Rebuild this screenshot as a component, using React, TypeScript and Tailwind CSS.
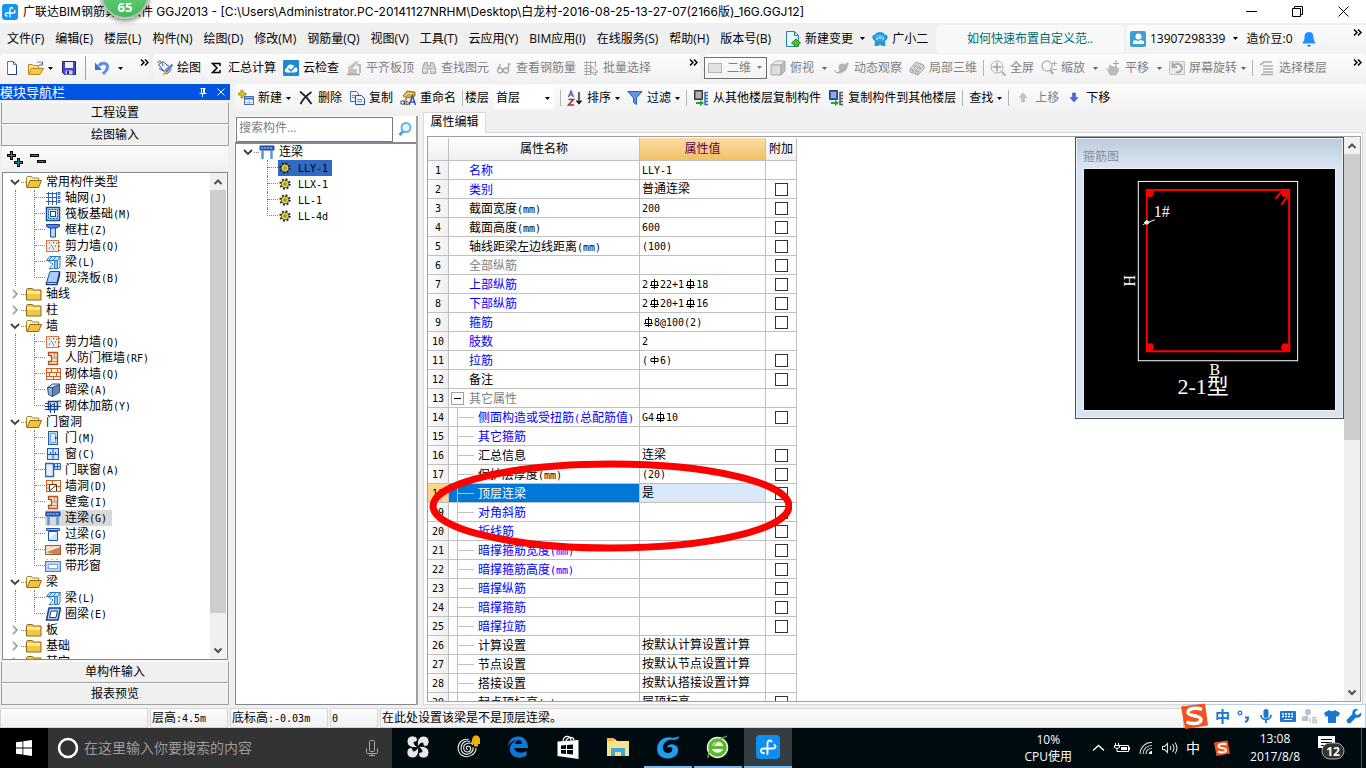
import React from "react";
import clsx from "clsx";

type IconName = string;

interface TreeGroup {
    name: string;
    items?: { name: string; icon: IconName; active?: boolean }[];
}

interface Property {
    name: string;
    value?: string;
    color?: "blue" | "gray";
    check?: boolean;
    child?: boolean;
    selected?: boolean;
}

const menus = [
    "文件(F)",
    "编辑(E)",
    "楼层(L)",
    "构件(N)",
    "绘图(D)",
    "修改(M)",
    "钢筋量(Q)",
    "视图(V)",
    "工具(T)",
    "云应用(Y)",
    "BIM应用(I)",
    "在线服务(S)",
    "帮助(H)",
    "版本号(B)",
];

const groups: TreeGroup[] = [
    {
        name: "常用构件类型",
        items: [
            { name: "轴网(J)", icon: "axis" },
            { name: "筏板基础(M)", icon: "raft" },
            { name: "框柱(Z)", icon: "column" },
            { name: "剪力墙(Q)", icon: "shear" },
            { name: "梁(L)", icon: "beam" },
            { name: "现浇板(B)", icon: "slab" },
        ],
    },
    { name: "轴线" },
    { name: "柱" },
    {
        name: "墙",
        items: [
            { name: "剪力墙(Q)", icon: "shear" },
            { name: "人防门框墙(RF)", icon: "niche" },
            { name: "砌体墙(Q)", icon: "brick" },
            { name: "暗梁(A)", icon: "hidden" },
            { name: "砌体加筋(Y)", icon: "rebar" },
        ],
    },
    {
        name: "门窗洞",
        items: [
            { name: "门(M)", icon: "door" },
            { name: "窗(C)", icon: "window" },
            { name: "门联窗(A)", icon: "doorwin" },
            { name: "墙洞(D)", icon: "hole" },
            { name: "壁龛(I)", icon: "niche" },
            { name: "连梁(G)", icon: "link", active: true },
            { name: "过梁(G)", icon: "lintel" },
            { name: "带形洞", icon: "striphole" },
            { name: "带形窗", icon: "stripwin" },
        ],
    },
    {
        name: "梁",
        items: [
            { name: "梁(L)", icon: "beam" },
            { name: "圈梁(E)", icon: "ring" },
        ],
    },
    { name: "板" },
    { name: "基础" },
    { name: "其它" },
];

// $ is a grade III bar symbol, % is a grade I bar symbol
const properties: Property[] = [
    { name: "名称", value: "LLY-1", color: "blue" },
    { name: "类别", value: "普通连梁", color: "blue", check: true },
    { name: "截面宽度(mm)", value: "200", check: true },
    { name: "截面高度(mm)", value: "600", check: true },
    { name: "轴线距梁左边线距离(mm)", value: "(100)", check: true },
    { name: "全部纵筋", color: "gray", check: true },
    { name: "上部纵筋", value: "2$22+1$18", color: "blue", check: true },
    { name: "下部纵筋", value: "2$20+1$16", color: "blue", check: true },
    { name: "箍筋", value: "$8@100(2)", color: "blue", check: true },
    { name: "肢数", value: "2", color: "blue" },
    { name: "拉筋", value: "(%6)", color: "blue", check: true },
    { name: "备注", check: true },
    { name: "其它属性", color: "gray" },
    { name: "侧面构造或受扭筋(总配筋值)", value: "G4$10", color: "blue", check: true, child: true },
    { name: "其它箍筋", color: "blue", child: true },
    { name: "汇总信息", value: "连梁", check: true, child: true },
    { name: "保护层厚度(mm)", value: "(20)", check: true, child: true },
    { name: "顶层连梁", value: "是", check: true, child: true, selected: true },
    { name: "对角斜筋", color: "blue", check: true, child: true },
    { name: "折线筋", color: "blue", check: true, child: true },
    { name: "暗撑箍筋宽度(mm)", color: "blue", check: true, child: true },
    { name: "暗撑箍筋高度(mm)", color: "blue", check: true, child: true },
    { name: "暗撑纵筋", color: "blue", check: true, child: true },
    { name: "暗撑箍筋", color: "blue", check: true, child: true },
    { name: "暗撑拉筋", color: "blue", check: true, child: true },
    { name: "计算设置", value: "按默认计算设置计算", child: true },
    { name: "节点设置", value: "按默认节点设置计算", child: true },
    { name: "搭接设置", value: "按默认搭接设置计算", child: true },
    { name: "起点顶标高(m)", value: "层顶标高", check: true, child: true },
];

export default function App() {
    return (
        <div className="h-screen flex flex-col overflow-hidden bg-[#f0f0f0] text-black text-xs leading-4 font-['Open_Sans','Noto_Sans_CJK_SC',sans-serif] whitespace-nowrap">
            <TitleBar />
            <MenuBar />
            <MainToolbar />
            <div className="flex-1 min-h-0 flex flex-row gap-[5px] pb-[3px]">
                <NavPanel />
                <div className="flex-1 min-w-0 flex flex-col">
                    <ComponentToolbar />
                    <div className="flex-1 min-h-0 flex flex-row gap-[5px]">
                        <ComponentPanel />
                        <PropertyEditor />
                    </div>
                </div>
            </div>
            <StatusBar />
            <Taskbar />
        </div>
    );
}

// SimSun style text: full width characters are 12px, latin ones are 6px
function Song({ text }: { text: string }) {
    return (
        <>
            {text.split(/([$%]|[ -#&-~]+)/).map((part, i) => {
                if (part === "") return null;
                if (part === "$" || part === "%") {
                    return <BarSymbol key={i} double={part === "$"} />;
                }
                return /^[ -~]/.test(part) ? (
                    <span key={i} className="text-[10px] font-['DejaVu_Sans_Mono',monospace]">
                        {part}
                    </span>
                ) : (
                    <span key={i}>{part}</span>
                );
            })}
        </>
    );
}

function BarSymbol({ double }: { double: boolean }) {
    return (
        <svg viewBox="0 0 12 10" className="inline-block w-3 h-[10px] align-[-1px]" fill="none" stroke="#000">
            {double ? (
                <path d="M3.500 2.500h6v4h-6zM6.500 0v10M2 6.500h9M3 8.500h7" />
            ) : (
                <path d="M3 3.500h7v3h-7zM6.500 1v8" />
            )}
        </svg>
    );
}

function Caret() {
    return (
        <svg viewBox="0 0 5 3" className="w-[5px] h-[3px] shrink-0">
            <path d="M0 0h5L2.5 3z" fill="currentColor" />
        </svg>
    );
}

function More() {
    return (
        <svg viewBox="0 0 9 7" className="w-[9px] h-[7px] shrink-0" fill="none" stroke="#000" strokeWidth="1.5">
            <path d="M1 .5l3 3-3 3M5 .5l3 3-3 3" />
        </svg>
    );
}

function Separator() {
    return <div className="w-px h-4 -mx-px bg-[#b5b5b5] shrink-0"></div>;
}

function Tool({
    icon,
    label,
    caret,
    disabled,
}: {
    icon?: IconName;
    label: string;
    caret?: boolean;
    disabled?: boolean;
}) {
    return (
        <button
            className={clsx("flex flex-row items-center gap-1 shrink-0", disabled && "text-[#808080]")}
            disabled={disabled}
        >
            {icon && <Icon name={icon} />}
            <span>{label}</span>
            {caret && <Caret />}
        </button>
    );
}

function TitleBar() {
    return (
        <header className="h-[23px] shrink-0 bg-white flex flex-row items-center relative pl-[2px]">
            <Icon name="app" />
            <h1 className="ml-[5px] flex-1 text-xs font-['Inter','Noto_Sans_CJK_SC',sans-serif]">
                广联达BIM钢筋算量软件 GGJ2013 - [C:\Users\Administrator.PC-20141127NRHM\Desktop\白龙村-2016-08-25-13-27-07(2166版)_16G.GGJ12]
            </h1>
            <div className="flex flex-row items-center">
                <button className="w-[46px] flex justify-center" aria-label="最小化">
                    <svg viewBox="0 0 11 11" className="w-[11px]" stroke="#000" fill="none">
                        <path d="M0 5.5h11" />
                    </svg>
                </button>
                <button className="w-[46px] flex justify-center" aria-label="还原">
                    <svg viewBox="0 0 11 11" className="w-[11px]" stroke="#000" fill="none">
                        <path d="M.5 2.5h8v8h-8zM2.5 2.5v-2h8v8h-2" />
                    </svg>
                </button>
                <button className="w-[46px] flex justify-center" aria-label="关闭">
                    <svg viewBox="0 0 11 11" className="w-[11px]" stroke="#000" fill="none">
                        <path d="M.5 .5l10 10M10.5 .5l-10 10" />
                    </svg>
                </button>
            </div>
            <div className="absolute left-[101px] -top-[29px] w-12 h-12 rounded-full bg-linear-to-b from-[#7fd98f] to-[#3fbb5b] border-2 border-[#b9bdb9] shadow-[0_2px_5px_rgba(0,0,0,0.5)] z-10 flex items-end justify-center pb-[2px] text-[13px] font-bold text-white">
                65
            </div>
        </header>
    );
}

function MenuBar() {
    return (
        <nav className="h-[31px] shrink-0 flex flex-row items-center pl-[7px]">
            <div className="flex flex-row items-center gap-[11px]">
                {menus.map((menu) => (
                    <button key={menu}>{menu}</button>
                ))}
            </div>
            <div className="ml-[14px] flex flex-row items-center gap-[7px]">
                <Tool icon="newchange" label="新建变更" />
                <Caret />
                <Tool icon="robot" label="广小二" />
            </div>
            <div className="ml-2 flex-1 h-[28px] rounded-sm bg-[#f8f8f8] flex items-center justify-center">
                <a href="#" className="text-[#006b6b]">
                    如何快速布置自定义范..
                </a>
            </div>
            <div className="ml-[2px] w-[240px] h-[28px] rounded-sm bg-linear-to-b from-[#fcfcfc] to-[#f2f2f2] flex flex-row items-center pl-1 pr-1 relative">
                <Tool icon="user" label="13907298339" />
                <span className="mx-2">
                    <Caret />
                </span>
                <span>造价豆:0</span>
                <span className="ml-2">
                    <Icon name="bell" />
                </span>
                <span className="ml-auto mb-3">
                    <More />
                </span>
            </div>
        </nav>
    );
}

function MainToolbar() {
    return (
        <div className="h-[30px] shrink-0 flex flex-row items-stretch gap-1 pb-[2px]">
            <div className="w-[149px] rounded bg-linear-to-b from-[#fdfdfd] to-[#f1f1f1] flex flex-row items-center pl-1 gap-1">
                <button aria-label="新建工程">
                    <Icon name="file" />
                </button>
                <button aria-label="打开" className="flex flex-row items-center gap-1 ml-1">
                    <Icon name="open" />
                    <Caret />
                </button>
                <button aria-label="保存" className="ml-1">
                    <Icon name="save" />
                </button>
                <div className="w-px h-6 ml-1 bg-[#a0a0a0]"></div>
                <button aria-label="撤销" className="flex flex-row items-center gap-2 ml-1">
                    <Icon name="undo" />
                    <Caret />
                </button>
                <span className="ml-auto mb-3">
                    <More />
                </span>
            </div>
            <div className="w-[547px] rounded bg-linear-to-b from-[#fdfdfd] to-[#f1f1f1] flex flex-row items-center pl-1 pr-[2px] gap-[7px]">
                <Tool icon="draw" label="绘图" />
                <Tool icon="sigma" label="汇总计算" />
                <Tool icon="cloud" label="云检查" />
                <Tool icon="align" label="平齐板顶" disabled />
                <Tool icon="binoculars" label="查找图元" disabled />
                <Tool icon="glasses" label="查看钢筋量" disabled />
                <Tool icon="batch" label="批量选择" disabled />
                <span className="ml-auto mb-3">
                    <More />
                </span>
            </div>
            <div className="flex-1 rounded bg-linear-to-b from-[#fdfdfd] to-[#f1f1f1] flex flex-row items-center gap-[7px] pr-1">
                <label className="w-[63px] h-[22px] border border-[#707070] relative flex flex-row items-center pl-[2px] gap-1 text-[#808080]">
                    <Icon name="flat" />
                    <select
                        aria-label="视图模式"
                        className="appearance-none w-full bg-transparent text-xs leading-4 outline-none"
                        disabled
                    >
                        <option>二维</option>
                    </select>
                    <span className="absolute right-1 top-2">
                        <Caret />
                    </span>
                </label>
                <div className="-ml-1 flex flex-row items-center gap-2 text-[#606060]">
                    <Tool icon="cube" label="俯视" disabled />
                    <Caret />
                </div>
                <Tool icon="orbit" label="动态观察" disabled />
                <Tool icon="local3d" label="局部三维" disabled />
                <Separator />
                <Tool icon="fullscreen" label="全屏" disabled />
                <div className="flex flex-row items-center gap-2 text-[#606060]">
                    <Tool icon="zoom" label="缩放" disabled />
                    <Caret />
                </div>
                <div className="flex flex-row items-center gap-2 text-[#606060]">
                    <Tool icon="pan" label="平移" disabled />
                    <Caret />
                </div>
                <div className="flex flex-row items-center gap-1 text-[#606060]">
                    <Tool icon="rotate" label="屏幕旋转" disabled />
                    <Caret />
                </div>
                <Separator />
                <Tool icon="floors" label="选择楼层" disabled />
                <span className="ml-auto mb-3">
                    <More />
                </span>
            </div>
        </div>
    );
}

function ComponentToolbar() {
    return (
        <div className="h-[28px] shrink-0 rounded-sm bg-linear-to-b from-[#fdfdfd] to-[#f1f1f1] flex flex-row items-center pl-[3px] gap-[7px]">
            <Tool icon="add" label="新建" caret />
            <Tool icon="delete" label="删除" />
            <Tool icon="copy" label="复制" />
            <Tool icon="rename" label="重命名" />
            <Separator />
            <label className="-ml-1 flex flex-row items-center gap-[5px] relative">
                楼层
                <select className="appearance-none w-[60px] h-[22px] bg-white text-xs leading-4 pl-[2px] outline-none">
                    <option>首层</option>
                </select>
                <span className="absolute right-1 top-[10px]">
                    <Caret />
                </span>
            </label>
            <Separator />
            <Tool icon="sort" label="排序" caret />
            <Tool icon="filter" label="过滤" caret />
            <Separator />
            <Tool icon="copyfrom" label="从其他楼层复制构件" />
            <Tool icon="copyto" label="复制构件到其他楼层" />
            <Separator />
            <Tool label="查找" caret />
            <Separator />
            <Tool icon="up" label="上移" disabled />
            <Tool icon="down" label="下移" />
        </div>
    );
}

function NavButton({ label }: { label: string }) {
    return (
        <button className="h-[22px] shrink-0 border border-[#a0a0a0] border-t-white bg-[#f0f0f0] text-center">
            {label}
        </button>
    );
}

function NavPanel() {
    return (
        <aside className="w-[230px] shrink-0 flex flex-col">
            <div className="h-4 shrink-0 bg-[#0054e3] text-white flex flex-row items-center">
                <h2 className="flex-1 text-[13px] leading-4">模块导航栏</h2>
                <button aria-label="固定" className="w-[18px] flex justify-center">
                    <svg viewBox="0 0 8 9" className="w-2" fill="none" stroke="#fff">
                        <path d="M1.5 .5h5M2.5 .5v5M5.5 .5v5M4.500 .5v5M.5 5.500h7M3.500 5.500v3.500" />
                    </svg>
                </button>
                <button aria-label="关闭导航" className="w-[18px] flex justify-center">
                    <svg viewBox="0 0 8 8" className="w-2" fill="none" stroke="#fff">
                        <path d="M.5 .5l7 7M7.500 .5l-7 7" />
                    </svg>
                </button>
            </div>
            <div className="flex-1 min-h-0 flex flex-col px-px pt-[2px]">
                <NavButton label="工程设置" />
                <NavButton label="绘图输入" />
                <div className="h-[26px] shrink-0 mx-px bg-linear-to-b from-[#fbfbfb] to-[#f0f0f0] flex flex-row items-center gap-[7px] pl-[5px]">
                    <button aria-label="全部展开">
                        <Icon name="expand" />
                    </button>
                    <button aria-label="全部折叠">
                        <Icon name="collapse" />
                    </button>
                </div>
                <div className="flex-1 min-h-0 mx-px mb-px border border-[#828790] bg-white flex flex-row overflow-hidden pr-px">
                    <div className="flex-1 overflow-hidden pt-px">
                        {groups.map((group) => (
                            <NavGroup key={group.name} group={group} />
                        ))}
                    </div>
                    <Scrollbar thumb="bottom-[46px]" />
                </div>
                <NavButton label="单构件输入" />
                <NavButton label="报表预览" />
            </div>
        </aside>
    );
}

function NavGroup({ group }: { group: TreeGroup }) {
    return (
        <div>
            <div className="h-4 flex flex-row items-center pl-[6px]">
                <Chevron open={!!group.items} />
                <span className="w-[5px] border-b border-dotted border-[#808080]"></span>
                <Icon name={group.items ? "folderopen" : "folder"} />
                <span className="ml-1">
                    <Song text={group.name} />
                </span>
            </div>
            {group.items && (
                <div className="ml-3 border-l border-dotted border-[#808080]">
                    {group.items.map((item, i) => (
                        <div key={item.name} className="h-4 flex flex-row items-center pl-[18px]">
                            <Branch last={i === group.items!.length - 1} />
                            <div
                                className={clsx(
                                    "flex flex-row items-center gap-1 pr-[5px] h-4",
                                    item.active && "bg-[#d9d9d9]"
                                )}
                            >
                                <Icon name={item.icon} />
                                <span>
                                    <Song text={item.name} />
                                </span>
                            </div>
                        </div>
                    ))}
                </div>
            )}
        </div>
    );
}

function Branch({ last }: { last: boolean }) {
    return (
        <span className={clsx("w-[11px] h-4", !last && "border-l border-dotted border-[#808080]")}>
            <span
                className={clsx(
                    "block h-2 border-b border-dotted border-[#808080]",
                    last && "border-l"
                )}
            ></span>
        </span>
    );
}

function Chevron({ open }: { open: boolean }) {
    return (
        <svg viewBox="0 0 12 12" className="w-3 h-3 shrink-0" fill="none" strokeWidth="1.8">
            {open ? (
                <path d="M2 4l4 4 4-4" stroke="#404040" />
            ) : (
                <path d="M4 2l4 4-4 4" stroke="#a6a6a6" />
            )}
        </svg>
    );
}

function Scrollbar({ thumb }: { thumb: string }) {
    return (
        <div className="w-4 shrink-0 bg-[#f0f0f0] flex flex-col justify-between items-center relative">
            <svg viewBox="0 0 16 17" className="w-4" fill="none" stroke="#505050" strokeWidth="2">
                <path d="M4.500 11l3.500-3.500 3.500 3.500" />
            </svg>
            <div className={clsx("absolute left-0 right-0 top-[17px] bg-[#cdcdcd]", thumb)}></div>
            <svg viewBox="0 0 16 17" className="w-4" fill="none" stroke="#505050" strokeWidth="2">
                <path d="M4.500 6.500l3.500 3.500 3.500-3.500" />
            </svg>
        </div>
    );
}

function ComponentPanel() {
    return (
        <section className="w-[183px] shrink-0 flex flex-col mt-[4px] border-r-2 border-[#a0a0a0] bg-white">
            <div className="h-[26px] shrink-0 flex flex-row items-center pl-px">
                <input
                    type="text"
                    aria-label="搜索构件"
                    placeholder="搜索构件..."
                    className="w-[157px] h-[25px] border border-[#7a7a7a] bg-white px-[2px] pb-1 text-xs placeholder:text-[#808080] outline-none"
                />
                <button aria-label="搜索" className="flex-1 flex justify-center">
                    <svg viewBox="0 0 16 16" className="w-4" fill="none">
                        <path d="M6 10.500L2.500 14" stroke="#4b96d8" strokeWidth="2.500" />
                        <circle cx="9" cy="6.500" r="4.500" stroke="#5fb4ec" strokeWidth="2" fill="#eaf6fe" />
                    </svg>
                </button>
            </div>
            <div className="flex-1 border-t-2 border-l border-b border-[#828790]">
                <div className="h-4 flex flex-row items-center pl-[6px]">
                    <Chevron open />
                    <span className="w-[5px] border-b border-dotted border-[#808080]"></span>
                    <Icon name="link" />
                    <span className="ml-1">连梁</span>
                </div>
                {["LLY-1", "LLX-1", "LL-1", "LL-4d"].map((name, i) => (
                    <div key={name} className="h-4 flex flex-row items-center pl-[31px]">
                        <Branch last={i === 3} />
                        <div
                            className={clsx(
                                "h-4 flex flex-row items-center gap-1 pr-1",
                                i === 0 && "bg-[#316ac5]"
                            )}
                        >
                            <Icon name="gear" />
                            <span>
                                <Song text={name} />
                            </span>
                        </div>
                    </div>
                ))}
            </div>
        </section>
    );
}

function PropertyEditor() {
    return (
        <section className="flex-1 min-w-0 flex flex-col pr-[3px]">
            <div className="h-[21px] shrink-0 flex flex-row">
                <div className="w-[63px] border border-b-0 border-[#d9d9d9] bg-white text-center pt-px">属性编辑</div>
                <div className="flex-1 border-b border-[#d9d9d9]"></div>
            </div>
            <div className="flex-1 min-h-0 border border-t-0 border-[#d9d9d9] bg-white p-[3px] pr-px pb-[2px]">
                <div className="h-full border border-[#a0a0a0] relative flex flex-row">
                    <div className="flex-1 overflow-hidden pt-px">
                        <PropertyTable />
                    </div>
                    <StirrupWindow />
                    <Scrollbar thumb="bottom-[261px]" />
                    <svg
                        viewBox="0 0 364 94"
                        className="absolute left-0 top-[322px] w-[364px] h-[94px] z-10 pointer-events-none"
                        fill="none"
                    >
                        <ellipse cx="183" cy="47" rx="178" ry="42" stroke="#f00" strokeWidth="7" />
                    </svg>
                </div>
            </div>
        </section>
    );
}

function PropertyTable() {
    const head = "h-[23px] border-r border-b border-[#c0c0c0] bg-linear-to-b font-normal p-0";
    const plain = "from-[#fdfdfd] to-[#f0f0f0]";
    const cell = "h-[19px] border-r border-b border-[#c0c0c0] p-0";

    return (
        <table className="border-separate border-spacing-0 table-fixed w-[369px]">
            <thead>
                <tr>
                    <th className={clsx(head, plain, "w-[21px]")}></th>
                    <th className={clsx(head, plain, "w-[191px]")}>属性名称</th>
                    <th className={clsx(head, "w-[126px] text-[#5a0050] from-[#fbdca4] to-[#f2c063]")}>属性值</th>
                    <th className={clsx(head, plain, "w-[31px]")}>附加</th>
                </tr>
            </thead>
            <tbody>
                {properties.map((property, i) => (
                    <tr key={i}>
                        <td
                            className={clsx(
                                cell,
                                "text-center",
                                property.selected ? "bg-[#ffd58c]" : "bg-linear-to-r from-[#fdfdfd] to-[#f0f0f0]"
                            )}
                        >
                            <Song text={String(i + 1)} />
                        </td>
                        <td className={clsx(cell, property.selected && "bg-[#0078d7]")}>
                            <div
                                className={clsx(
                                    "h-[18px] flex flex-row items-center overflow-hidden",
                                    property.color === "blue" && "text-[#0000ff]",
                                    property.color === "gray" && "text-[#808080]",
                                    property.selected && "text-white",
                                    property.child && "pl-2",
                                    !property.child && property.name !== "其它属性" && "pl-5"
                                )}
                            >
                                {property.child && (
                                    <span className="w-[17px] h-full mr-1 border-l border-[#c0c0c0] flex items-center">
                                        <span className="flex-1 border-b border-[#c0c0c0]"></span>
                                    </span>
                                )}
                                {property.name === "其它属性" && (
                                    <button
                                        aria-label="折叠其它属性"
                                        className="w-[13px] h-[13px] ml-[2px] mr-[5px] border border-[#a0a0a0] flex items-center justify-center"
                                    >
                                        <span className="w-[7px] h-px bg-black"></span>
                                    </button>
                                )}
                                <span className="pt-[2px]">
                                    <Song text={property.name} />
                                </span>
                            </div>
                        </td>
                        <td className={clsx(cell, "pl-[2px]", property.selected && "bg-[#d9e9f8]")}>
                            <div className="h-[18px] pt-px">
                                <Song text={property.value || ""} />
                            </div>
                        </td>
                        <td className={cell}>
                            {property.check && (
                                <input
                                    type="checkbox"
                                    aria-label={"附加 " + property.name}
                                    className="block mx-auto appearance-none w-[13px] h-[13px] border border-[#333] bg-white"
                                />
                            )}
                        </td>
                    </tr>
                ))}
            </tbody>
        </table>
    );
}

function StirrupWindow() {
    return (
        <div className="absolute right-4 top-0 w-[269px] border border-[#505050] bg-linear-to-b from-[#bccbda] to-[#d8e4f2] to-10% p-[7px] pt-0 shadow-[inset_0_0_0_1px_#eef3f9]">
            <div className="h-[30px] pt-[11px] text-[#8a8f96]">箍筋图</div>
            <svg viewBox="0 0 252 242" className="block w-full bg-black border border-[#f0f0f0]" fill="none">
                <rect x="54.500" y="12.500" width="160" height="180" stroke="#fff" />
                <rect x="63" y="21" width="143" height="162" stroke="#f00" strokeWidth="2" />
                <g fill="#f00">
                    <circle cx="66" cy="24" r="4" />
                    <circle cx="202" cy="24" r="4" />
                    <circle cx="66" cy="179" r="4" />
                    <circle cx="202" cy="179" r="4" />
                </g>
                <path d="M199 22l-7 8M204 28l-6 8" stroke="#f00" strokeWidth="2" />
                <path d="M59 56l4-2 8-3" stroke="#fff" />
                <path d="M60 54l3-3 3 3-3 2z" fill="#fff" />
                <g fill="#fff" className="font-['Liberation_Serif','Noto_Sans_CJK_SC',serif] text-[16px]">
                    <text x="70" y="48">
                        1#
                    </text>
                    <text x="126" y="207">
                        B
                    </text>
                    <text transform="translate(51 118) rotate(-90)">H</text>
                    <text x="94" y="226" className="text-[22px]">
                        2-1型
                    </text>
                </g>
            </svg>
        </div>
    );
}

function StatusBar() {
    const cell = "h-5 border border-[#d5d5d5] bg-linear-to-b from-[#fdfdfd] to-[#f1f1f1] pl-px pt-px";

    return (
        <footer className="h-5 shrink-0 flex flex-row gap-[2px] relative">
            <div className={clsx(cell, "w-[148px]")}></div>
            <div className={clsx(cell, "w-[78px]")}>
                <Song text="层高:4.5m" />
            </div>
            <div className={clsx(cell, "w-[98px]")}>
                <Song text="底标高:-0.03m" />
            </div>
            <div className={clsx(cell, "w-12")}>
                <Song text="0" />
            </div>
            <div className={clsx(cell, "flex-1")}>在此处设置该梁是不是顶层连梁。</div>
            <div className="absolute right-0 bottom-0 w-[183px] h-6 bg-white border border-[#b8cfe4] flex flex-row items-center pl-[31px] gap-[6px] z-10">
                <svg viewBox="0 0 28 28" className="absolute -left-1 -top-[3px] w-7 h-7">
                    <path d="M1 4.500L25 1.500l3 22L5 27z" fill="#f4511e" />
                    <path
                        d="M22 7.500C16 5 8 6.500 8 10.500c0 4 13 2.500 13 7 0 4.500-9 5-14.500 2.500"
                        stroke="#fff"
                        strokeWidth="3.500"
                        fill="none"
                    />
                </svg>
                <span className="text-[15px] font-bold text-[#1976d2]">中</span>
                {["punct", "mic", "keyboard", "person", "shirt", "wrench"].map((name) => (
                    <Icon key={name} name={name} />
                ))}
            </div>
        </footer>
    );
}

function Taskbar() {
    const apps = ["fan", "swirl", "edge", "store", "explorer", "gstar", "browser", "ggj"];

    return (
        <div className="h-10 shrink-0 bg-[#000b10] flex flex-row items-center text-white">
            <button aria-label="开始" className="w-12 h-full bg-black flex items-center justify-center">
                <svg viewBox="0 0 16 16" className="w-4" fill="#fff">
                    <path d="M0 2.300l6.500-.9v6.200H0zM7.300 1.300L16 0v7.600H7.300zM0 8.400h6.500v6.200L0 13.700zM7.300 8.400H16V16l-8.700-1.200z" />
                </svg>
            </button>
            <label className="w-[344px] h-full bg-[#333] flex flex-row items-center pl-2 pr-[14px] gap-1">
                <svg viewBox="0 0 24 24" className="w-6 h-6" fill="none">
                    <circle cx="12" cy="12" r="9" stroke="#fff" strokeWidth="2.500" />
                </svg>
                <input
                    type="text"
                    aria-label="搜索"
                    placeholder="在这里输入你要搜索的内容"
                    className="flex-1 bg-transparent text-sm placeholder:text-[#9a9a9a] outline-none"
                />
                <svg viewBox="0 0 12 16" className="w-3" fill="none" stroke="#a8a8a8">
                    <path d="M3.500 1.500q0-1 1-1h3q1 0 1 1v9q0 1-1 1h-3q-1 0-1-1zM.5 8.500v4q0 1 1 1h9q1 0 1-1v-4M6 13.500v2M3 15.500h6" />
                </svg>
            </label>
            <div className="h-full flex flex-row gap-[2px] pl-[2px]">
                {apps.map((app, i) => (
                    <button
                        key={app}
                        aria-label={app}
                        className={clsx(
                            "h-full w-12 flex items-center justify-center border-b-2",
                            i > 4 ? "border-[#76b9ed]" : "border-transparent",
                            i === 7 && "bg-[#363d40]"
                        )}
                    >
                        <AppIcon name={app} />
                    </button>
                ))}
            </div>
            <div className="ml-auto flex flex-row items-center h-full">
                <div className="text-center leading-[17px]">
                    <div>10%</div>
                    <div>CPU使用</div>
                </div>
                <div className="flex flex-row items-center gap-2 ml-[18px]">
                    {["chevup", "battery", "wifi", "speaker"].map((name) => (
                        <Icon key={name} name={name} />
                    ))}
                    <span className="text-sm">中</span>
                    <span className="ml-[6px]">
                        <Icon name="sogou" />
                    </span>
                </div>
                <div className="ml-5 text-center leading-[18px]">
                    <div>13:08</div>
                    <div>2017/8/8</div>
                </div>
                <button aria-label="通知" className="w-[62px] h-full border-r border-[#555] mr-1 flex items-center justify-center">
                    <svg viewBox="0 0 28 26" className="w-7">
                        <path d="M1 1h17v12h-8l-3 4v-4H1z" fill="#fff" />
                        <path d="M4 4.500h11M4 7.500h11M4 10.500h8" stroke="#000" />
                        <rect x="5" y="8" width="22" height="16" rx="8" fill="#333" stroke="#aaa" />
                        <text x="16" y="21" textAnchor="middle" fill="#fff" className="text-xs font-bold">
                            12
                        </text>
                    </svg>
                </button>
            </div>
        </div>
    );
}

function AppIcon({ name }: { name: string }) {
    return (
        <svg viewBox="0 0 24 24" className="w-6 h-6" fill="none">
            {name === "fan" && (
                <g fill="#e8e8e8" stroke="#000b10" strokeWidth="1">
                    <path d="M12 12C6 14 1 11 1 6.500 1 2 5 .5 8 1c3 1 4 3 3 5-1 1.500-3 1-3 1 0 3 2 4 4 5z" />
                    <path d="M12 12c-2-6 1-11 5.500-11S23.500 5 23 8c-1 3-3 4-5 3-1.500-1-1-3-1-3-3 0-4 2-5 4z" />
                    <path d="M12 12c6-2 11 1 11 5.500S19 23.500 16 23c-3-1-4-3-3-5 1-1.500 3-1 3-1 0-3-2-4-4-5z" />
                    <path d="M12 12c2 6-1 11-5.500 11S.5 19 1 16c1-3 3-4 5-3 1.500 1 1 3 1 3 3 0 4-2 5-4z" />
                </g>
            )}
            {name === "swirl" && (
                <>
                    <path
                        d="M12 14.500c-2 0-2.500-3 0-3.500 3 0 4 5 0 6-5 .5-6-7-1-8.500 3-1 5 0 6 1.500M17 12c1 5-5 9-9 6.500-5-3-3-10 1-12 2-.7 4-.5 5 0M20 13c0 7-9 11-14.500 7-5-4-4-11 0-14 2-1.500 5-2 7-1.500"
                        stroke="#eee"
                        strokeWidth="1.100"
                    />
                    <path d="M14 9c3-2 1-7 5-8.500h2C25 2 24 7 26 9zM18 9h4v2.500h-4z" fill="#eab308" />
                </>
            )}
            {name === "edge" && (
                <path
                    d="M2 11C3 4 8 1 13 1.500c6 .5 9 5 9 11.500H8.500c.5 5 7 6 12 3v4.500C13 25 3 22 4 13c.5-4 4-7 8-8-5 0-8 3-10 6zm7-2h7c0-5-6-5-7 0z"
                    fill="#1177d7"
                />
            )}
            {name === "store" && (
                <>
                    <path d="M1.500 6.500l21-1.500v19l-21-3z" fill="#fff" />
                    <path d="M7 6c1-6 8-6 8-.500M10 6c1-4 7-5 8-1" stroke="#fff" strokeWidth="1.200" />
                    <path d="M5 10.500l5-.5v4H5zM11 10l6-.5V14h-6zM5 15h5v4l-5-.5zM11 15h6v4.500l-6-.5z" fill="#000b10" />
                </>
            )}
            {name === "explorer" && (
                <>
                    <path d="M1 4h8l2 2h12v15H1z" fill="#fbe18b" />
                    <path d="M1 3h7v3H1z" fill="#f3b93a" />
                    <path d="M5 13h14v8h-4v-4H9v4H5z" fill="#3aa9e0" />
                </>
            )}
            {name === "gstar" && (
                <path
                    d="M23.500 1c-1 3-3 4-6 4C11 4 6 9 7 14c1 5 7 5 9 2 1-2 0-4-2-4-2-.300-3 1-3 1 0-5 10-5 11 1 1 6-5 10-11 9.500C3 23 0 17 1.500 11 3 5 9 1.500 15 2.500c3 .5 6 0 8.500-1.500z"
                    fill="#1e9cf0"
                />
            )}
            {name === "browser" && (
                <>
                    <circle cx="11.500" cy="12.500" r="10" fill="#5cb82c" stroke="#e6f3dc" strokeWidth="1.500" />
                    <path d="M6 11c1-6 10-6 11 0zM6 14h11c-2 5-9 5-11 0z" fill="#fff" />
                    <path d="M2 23c0-8 8-18 19-22" stroke="#5cc02c" strokeWidth="1.300" />
                </>
            )}
            {name === "ggj" && (
                <>
                    <rect width="24" height="24" rx="4" fill="#0f8ef2" />
                    <path
                        d="M15.500 6.500c-1-2-4-1-4 1.500v11M12 13.500H7.500c-3 0-3.500 4.500 0 4.500h.5M12 13.500h4.500c3.500 0 3.500-3 2-3.500"
                        stroke="#fff"
                        strokeWidth="1.800"
                        strokeLinecap="round"
                    />
                </>
            )}
        </svg>
    );
}

const icons: Record<string, React.ReactNode> = {
    app: (
        <>
            <rect width="16" height="16" rx="3" fill="#1296f3" />
            <path
                d="M10.500 4.500C10 3 8 3.300 8 5v8M8 9H5c-2 0-2.500 3 0 3M8 9h3c2.500 0 2.500-2 1.500-2.500"
                stroke="#fff"
                strokeWidth="1.300"
                strokeLinecap="round"
            />
        </>
    ),
    newchange: (
        <>
            <path d="M1.500 .5h8l4 4v11h-12z" fill="#eaf6fd" stroke="#2a7fb0" />
            <path d="M9.500 .5v4h4" stroke="#2a7fb0" />
            <path d="M11 8l4.500 4-4.500 4-4.500-4z" fill="#4cbf1e" stroke="#2c8a10" />
        </>
    ),
    robot: (
        <>
            <path d="M3 4C4 0 12 0 13 4c3-1 4 4 0 6l.5 5H10l-2-1.500L6 15H2.500L3 10C-1 8 0 3 3 4z" fill="#1e9bdd" />
            <path d="M4 5.500q4-2.500 8 0v3q-4 3-8 0z" fill="#8fd4f5" />
            <path d="M6 5.500v1.500M10 5.500v1.500M6 8.500q2 1.500 4 0" stroke="#075a8c" />
        </>
    ),
    user: (
        <>
            <rect width="16" height="16" rx="2" fill="#3f9fd4" />
            <circle cx="8.500" cy="5.500" r="3" fill="#fff" />
            <path d="M3 13v-3l3-1 2 1.500 2-1.500 4 1v3z" fill="#fff" />
        </>
    ),
    bell: (
        <>
            <path d="M8 1c4 0 4.500 3 4.500 6 0 3 2 4 2 5.500h-13C1.500 11 3.500 10 3.500 7 3.500 4 4 1 8 1z" fill="#1e90ff" />
            <path d="M6 14h4l-2 2z" fill="#0b5fb0" />
        </>
    ),
    file: (
        <>
            <path d="M3.500 1.500h6l3 3v10h-9z" fill="#fff" stroke="#5878a8" />
            <path d="M9.500 1.500v3h3" stroke="#5878a8" />
            <path d="M4 14.500h8.500v-9" stroke="#1f3f73" />
        </>
    ),
    open: (
        <>
            <path d="M.5 14V4.500h4l1 1h5v3" fill="#f7dc8a" stroke="#b98a1e" />
            <path d="M.5 14.500l3-6h12l-3.500 6z" fill="#f6c84d" stroke="#b98a1e" />
            <path d="M9 3c2-2 4-1 5 1M14.500 1.500V5H11" stroke="#3f6fae" />
        </>
    ),
    save: (
        <>
            <path d="M1.500 1.500h13v13h-11l-2-2z" fill="#4747c9" stroke="#23237a" />
            <path d="M4 2h8v6H4z" fill="#eef0fb" />
            <path d="M4.500 10.500h7v4h-7z" fill="#d0d4e8" />
            <path d="M6 11h2v3H6z" fill="#23237a" />
        </>
    ),
    undo: (
        <>
            <path d="M5 6c2-4 8-3 8.500 0 .5 4-2 5-4.500 8" stroke="#5b8ee0" strokeWidth="3" />
            <path d="M1 2.500V10h7z" fill="#3a6fcf" />
        </>
    ),
    draw: (
        <>
            <path d="M1.500 4.500l4.500-3 6 5-5 5z" fill="#e8eef8" stroke="#2d5590" />
            <path d="M1 3c0-3 4-3 5 3M7 11l-5-2.500" stroke="#2d5590" />
            <path d="M15.500 4.500L9 12" stroke="#5a82c0" strokeWidth="2.500" />
            <path d="M5.500 15.500L8 11l3 2.500z" fill="#e9a21a" />
            <path d="M14.500 9l-4.500 5" stroke="#2d5590" />
        </>
    ),
    sigma: <path d="M12 6V3.500H4.500L9 8l-4.500 4.500H12V10" stroke="#000" strokeWidth="1.500" />,
    cloud: (
        <>
            <rect width="16" height="16" rx="1" fill="#1b8ad3" />
            <path d="M4 12.500c-3 0-3-4 0-4.500 0-4 6-5 7.500-1 4 0 4 5.500 0 5.500z" fill="#fff" />
            <path d="M5.500 8.500l2.500 2.500 5-5.500" stroke="#1b8ad3" strokeWidth="1.500" />
        </>
    ),
    align: (
        <>
            <path d="M1 8l9-7 3 1-7 7zM2 9h9v5H2z" fill="#c4c4c4" />
            <path d="M1 14.500h13M11 5h3v8" stroke="#a8a8a8" strokeWidth="1.500" />
        </>
    ),
    binoculars: (
        <>
            <path d="M3.500 2.500h3v3h3v-3h3l2 6v5h-5v-5h-3v5h-5v-5z" fill="#d0d0d0" stroke="#a8a8a8" />
            <path d="M2 10.500h4M10 10.500h4" stroke="#f4f4f4" />
        </>
    ),
    glasses: (
        <path
            d="M6.500 10.500a2.500 2.500 0 1 1-5 0a2.500 2.500 0 1 1 5 0M12.500 10.500a2.500 2.500 0 1 1-5 0a2.500 2.500 0 1 1 5 0M1.500 10l3-6M12.500 10V4h2"
            stroke="#a8a8a8"
            strokeWidth="1.300"
        />
    ),
    batch: (
        <>
            <path d="M1 2.500h12M1 5.500h7M1 8.500h7M1 11.500h7M1 14.500h7M3.500 1v14M7.500 1v14M12.500 1v6" stroke="#a8a8a8" />
            <path d="M8 6l7 6-3 .5 1 2.500-2-.5-1-2L8 13z" fill="#eee" stroke="#a0a0a0" />
        </>
    ),
    flat: <rect x="1.500" y="3.500" width="13" height="9" fill="#e2e2e2" stroke="#b8b8b8" />,
    cube: (
        <>
            <path d="M1 5l5-4h9l-4 4z" fill="#ededed" stroke="#aaa" />
            <path d="M1 5h10v10H1z" fill="#dedede" stroke="#aaa" />
            <path d="M11 5l4-4v10l-4 4z" fill="#bbb" stroke="#aaa" />
        </>
    ),
    orbit: (
        <>
            <path d="M2 13c4-1 7-9 12-11 2 4-3 11-8 12z" fill="#c6c6c6" />
            <circle cx="8.500" cy="7.500" r="4" fill="#b5b5b5" />
            <path d="M1 10c-1 6 12 0 13-7" stroke="#a5a5a5" />
        </>
    ),
    local3d: (
        <>
            <path d="M1 9l6-7 8 3v4l-6 6-8-3z" fill="#dcdcdc" stroke="#a8a8a8" />
            <path d="M1 9l8 3 6-7M9 12v3M3.500 10v3M6.500 11v3M4 5.500l8 3M9.500 3L3.500 10M12 4l-5.500 7" stroke="#a8a8a8" />
        </>
    ),
    fullscreen: (
        <>
            <circle cx="7" cy="7" r="6" stroke="#b0b0b0" />
            <path d="M7 2.500v9M2.500 7h9" stroke="#a0a0a0" strokeWidth="1.500" />
            <path d="M11.500 11.500l4 4" stroke="#b0b0b0" strokeWidth="2" />
        </>
    ),
    zoom: (
        <>
            <circle cx="6" cy="6" r="5" stroke="#b8b8b8" strokeWidth="1.500" />
            <path d="M9 10l3 4" stroke="#b0b0b0" strokeWidth="2.500" />
            <path d="M11 3.500h5M13.500 1v5M11 9.500h5" stroke="#a8a8a8" />
        </>
    ),
    pan: (
        <>
            <path d="M1 8l3 1V6c1-2 2-1 3 0l5 1c2 0 2 2 2 4l-3 4.500H5z" fill="#bcbcbc" />
            <path d="M11 0v7M8 3.500h6" stroke="#a0a0a0" />
        </>
    ),
    rotate: (
        <>
            <path d="M.5 1.500h15v13H.5z" fill="#e9e9e9" stroke="#c4c4c4" />
            <path d="M4 6c3-4 9-2 9 2 0 3-3 5-6 4M3.500 2.500V7H8" stroke="#a0a0a0" strokeWidth="1.700" />
        </>
    ),
    floors: (
        <path d="M1 5l4-3h8M4 6h10M4 9h10M4 12h10M2 14.500h12" stroke="#b0b0b0" strokeWidth="1.700" />
    ),
    add: (
        <>
            <rect x="6.500" y="6.500" width="9" height="8" fill="#eef4fd" stroke="#3f6fb8" />
            <path d="M7 8.500h8" stroke="#3f6fb8" strokeWidth="2" />
            <path d="M8 12.500h6M11.500 9v5" stroke="#9db9e2" />
            <path d="M3 0h2v3h3v2H5v3H3V5H0V3h3z" fill="#f0cf2c" stroke="#8a6d00" strokeWidth=".7" />
        </>
    ),
    delete: <path d="M2 1.500c4 3 8 7 11.500 12.500M13.500 2C9 5 5 9 2.500 14" stroke="#222" strokeWidth="1.800" />,
    copy: (
        <>
            <path d="M1.500 1.500h6l2 2v8h-8z" fill="#e9f1fd" stroke="#3f6fc0" />
            <path d="M6.500 5.500h6l3 3v6h-9z" fill="#e9f1fd" stroke="#2850a0" />
            <path d="M3 5.500h3M3 7.500h3M8 9.500h5M8 11.500h5" stroke="#6a94d8" />
        </>
    ),
    rename: (
        <>
            <path d="M3 6l4-5 8 1v4L8 8z" fill="#d9a93c" stroke="#6b4c10" strokeWidth=".7" />
            <path d="M4 6l4-3 5 1" stroke="#f7e08a" />
            <path d="M9 15l3.500-9 3 9M10 12h4" stroke="#2850b0" strokeWidth="1.500" />
            <circle cx="2.500" cy="12.500" r="1.800" stroke="#333" />
            <path d="M4.500 10.500V15M6 8v7c3 0 3-4 0-3.500" stroke="#333" strokeWidth=".8" />
        </>
    ),
    sort: (
        <>
            <path d="M1.500 7L4 1l2.500 6M2.500 5h3" stroke="#3454a8" strokeWidth="1.200" />
            <path d="M1.500 9.500h5l-5 5.500h5.500" stroke="#a03030" strokeWidth="1.500" />
            <path d="M12 2v11M9.500 10.500L12 13.500l2.500-3" stroke="#000" strokeWidth="1.200" />
        </>
    ),
    filter: <path d="M1 1.500h14L9.500 8v6.500l-3-2V8z" fill="#5b97e6" stroke="#2a5cb5" />,
    copyfrom: (
        <>
            <path d="M1.500 .5h8v9h-8z" fill="#777" stroke="#333" />
            <path d="M3 3h5M3 5h5M3 7h5" stroke="#eee" />
            <path d="M3 12h4v-2l4 3-4 3v-2H3z" fill="#22a03a" />
            <path d="M15 2.500h-3v12h3M12 5.500h3M12 8.500h3M12 11.500h3" stroke="#2f6ec0" strokeWidth="1.500" />
        </>
    ),
    copyto: (
        <>
            <path d="M1.500 .5h8v9h-8z" fill="#3567b8" stroke="#1f3f80" />
            <path d="M3 3h5M3 5h5M3 7h5" stroke="#eee" />
            <path d="M3 12h4v-2l4 3-4 3v-2H3z" fill="#22a03a" />
            <path d="M15 2.500h-3v12h3M12 5.500h3M12 8.500h3M12 11.500h3" stroke="#555" strokeWidth="1.500" />
        </>
    ),
    up: <path d="M8 3l4 4.500H9.500V12h-3V7.500H4z" fill="#c4c4c4" stroke="#b0b0b0" strokeWidth=".5" />,
    down: <path d="M8 12L4 7.500h2.500V3h3v4.500H12z" fill="#3d6fe0" stroke="#2450b0" strokeWidth=".5" />,
    expand: (
        <>
            <path d="M0 4.500h9M4.500 0v9M7 11.500h9M11.500 7v9" stroke="#000" strokeWidth="3" />
            <path d="M1 4.500h7M4.500 1v7M8 11.500h7M11.500 8v7" stroke="#109090" strokeWidth="1.200" />
        </>
    ),
    collapse: (
        <>
            <path d="M0 4.500h9M7 10.500h9" stroke="#000" strokeWidth="3" />
            <path d="M1 4.500h7M8 10.500h7" stroke="#109090" strokeWidth="1.200" />
        </>
    ),
    folder: (
        <>
            <path d="M.5 14V3.500l1-1h5l1 1.500h7.500v10z" fill="#f2c744" stroke="#8f6a14" />
            <path d="M1 5h13v3H1z" fill="#fbe79e" />
        </>
    ),
    folderopen: (
        <>
            <path d="M.5 13V3.500l1-1h4l1 1.500h6v4" fill="#fdf0c0" stroke="#a8831f" />
            <path d="M1 13.500L4 6.500h11.500l-3 7z" fill="#f5c33b" stroke="#8f6a14" />
        </>
    ),
    axis: (
        <>
            <path d="M1 3.500h11M1 7.500h11M1 11.500h11M3.500 2v13M7.500 2v13M11.500 2v13" stroke="#2f5fc4" />
            <path d="M13 2.500h2v2h-2zM13 6.500h2v2h-2zM13 10.500h2v2h-2z" stroke="#2f5fc4" />
        </>
    ),
    raft: (
        <>
            <rect x="1.500" y="1.500" width="13" height="13" fill="#d6e9f8" stroke="#0d4f96" strokeWidth="1.500" />
            <rect x="5.500" y="5.500" width="5" height="5" fill="#fff" stroke="#0d4f96" />
            <rect x="3.500" y="3.500" width="9" height="9" stroke="#0d4f96" strokeDasharray="2 1" />
        </>
    ),
    column: (
        <>
            <path d="M5.500 5h5v10h-5z" fill="#b9d6f7" stroke="#1d4fa8" />
            <path d="M1.500 2.500h13v2l-3 1.500h-7l-3-1.500z" fill="#4a86e0" stroke="#1d3f98" />
        </>
    ),
    shear: (
        <>
            <rect x="1.500" y="2.500" width="12" height="11" fill="#eee9e4" stroke="#c97b4a" />
            <path d="M4 5h1M8 4.500h1M6 7.500h1M10 8h1M4 10h1M8 11h1M11 5h1M7 9h1" stroke="#555" />
            <path d="M13 4.500h2M13 8.500h2M13 12.500h2" stroke="#b0541e" />
        </>
    ),
    beam: (
        <>
            <path d="M1.500 6.500l3-4h11l-3 4z" fill="#cfe5fb" stroke="#2a78c8" />
            <path d="M9.500 6.500h3v8h-3z" fill="#9cc9f4" stroke="#2a78c8" />
            <path d="M2 6l6 4-4 5 5-1M15 3v10l-2 2M4 6l3-3M8 6l3-3" stroke="#2a78c8" />
        </>
    ),
    slab: (
        <>
            <path d="M1.500 12.500L5 1.500h9.500L12 12.500z" fill="#a9cdf6" stroke="#1d4fa8" />
            <path d="M1.500 12.500v2H12l2.500-9v-4" stroke="#163a80" strokeWidth="1.500" />
        </>
    ),
    niche: (
        <>
            <path d="M3.500 2.500h9v12h-9v-3h3v-6h-3z" fill="#fbe0c8" stroke="#b0541e" strokeWidth="1.300" />
            <path d="M7 8h5M9.500 3v5M7 11.500h5" stroke="#d28a5a" />
        </>
    ),
    brick: (
        <>
            <rect x="1.500" y="2.500" width="14" height="11" fill="#fdeee2" stroke="#c8622a" />
            <path d="M1 6.500h14M1 10.500h14M6.500 2v4M11.500 6v4M4.500 6v4M8.500 10v4M12.500 2v4" stroke="#c8622a" />
        </>
    ),
    hidden: (
        <>
            <path d="M2.500 5.500l5-3.500h7l-4 3.500z" fill="#d5e4f6" stroke="#30507c" />
            <path d="M2.500 5.500h5v9l-4-2z" fill="#8fb2de" stroke="#30507c" />
            <path d="M7.500 5.500l7-3v8l-7 4z" fill="#5d86bc" stroke="#30507c" />
        </>
    ),
    rebar: (
        <>
            <rect x="3.500" y="3.500" width="9" height="8" fill="#dbe9fa" stroke="#123f90" strokeWidth="1.500" />
            <path d="M0 8.500h16M5.500 5v10M0 5.500h4M9.500 5v10M5 9l3-3 3 3M13 3h3v3M0 11.500h3" stroke="#123f90" />
        </>
    ),
    door: (
        <>
            <rect x="3.500" y="1.500" width="9" height="13" fill="#bcd8fa" stroke="#1d56b8" />
            <path d="M5.500 3.500h5v9h-5z" stroke="#6fa0e4" fill="#dceafd" />
            <path d="M10 8h1.500" stroke="#0d2f78" strokeWidth="2" />
        </>
    ),
    window: (
        <>
            <rect x="2.500" y="2.500" width="11" height="11" fill="#cfe2fb" stroke="#1d56b8" />
            <path d="M8 2v12M2.500 8.500h11M5.500 6v2M10.500 6v2" stroke="#1d56b8" />
        </>
    ),
    doorwin: (
        <>
            <path d="M.5 1.500h8v13h-8z" fill="#e6f0fd" stroke="#2f62c8" strokeWidth="1.500" />
            <path d="M9.500 1.500h6v6h-6zM12.500 1.500v6M9.500 4.500h6" fill="#cfe2fb" stroke="#2f62c8" />
        </>
    ),
    hole: (
        <>
            <rect x="1.500" y="2.500" width="14" height="11" fill="#fdeee2" stroke="#c8622a" />
            <path d="M4.500 13V6.500h7V13M4.500 13l7-6" fill="#fff" stroke="#5b3010" />
            <path d="M1 6.500h3M1 10h3M12 8.500h3M7.500 3v3" stroke="#c8622a" />
        </>
    ),
    link: (
        <>
            <path d="M1 2h14v4H1z" fill="#2f66c4" stroke="#1b3f90" />
            <path d="M3.500 6v9M12.500 6v9" stroke="#5d93de" strokeWidth="2.500" />
            <path d="M2 4h12" stroke="#a9cbf5" strokeDasharray="2 1" />
        </>
    ),
    lintel: (
        <>
            <path d="M1.500 2.500h13v2h-13z" fill="#9cc3f4" stroke="#1d56b8" />
            <path d="M3.500 5.500h9v9h-9z" fill="#cfe2fb" stroke="#1d56b8" />
            <path d="M4 6h8L4 13z" fill="#fff" />
        </>
    ),
    striphole: (
        <>
            <rect x=".5" y="3.500" width="15" height="9" fill="#f7dcc4" stroke="#a85a24" />
            <path d="M1 10l14-6v8H8z" fill="#c98552" />
            <path d="M1 9.500l14-5" stroke="#fff" />
        </>
    ),
    stripwin: (
        <>
            <rect x=".5" y="3.500" width="15" height="10" fill="#b9d2f6" stroke="#4a7ad0" />
            <rect x="3.500" y="6.500" width="9" height="4" fill="#fff" stroke="#7fa5e4" />
            <path d="M1 1.500h2M6 1.500h2M11 1.500h2" stroke="#f0a8a0" />
        </>
    ),
    ring: (
        <>
            <path d="M1.500 14L4 2h11.500L13 14z" fill="#b8d4f6" stroke="#163f90" strokeWidth="1.500" />
            <path d="M4.500 11.500L6 5h6.500L11 11.500z" fill="#fff" stroke="#163f90" />
        </>
    ),
    gear: (
        <>
            <circle cx="7" cy="8" r="4.700" stroke="#222" strokeWidth="2" strokeDasharray="1.800 1.900" />
            <circle cx="7" cy="8" r="3.800" fill="#f2e62e" stroke="#222" strokeWidth=".7" />
            <circle cx="7" cy="8" r="1.300" fill="#fff" stroke="#222" strokeWidth=".7" />
        </>
    ),
    punct: (
        <>
            <circle cx="4" cy="5" r="1.800" stroke="#1976d2" strokeWidth="1.300" />
            <path d="M9 9.500h3c0 3-1 4-3 4.500" stroke="#1976d2" strokeWidth="2" />
        </>
    ),
    mic: (
        <>
            <rect x="5.500" y="1" width="5" height="9" rx="2.500" fill="#1976d2" />
            <path d="M3 7c0 6 10 6 10 0M8 12v3" stroke="#1976d2" strokeWidth="1.800" />
        </>
    ),
    keyboard: (
        <>
            <rect y="3" width="16" height="11" rx="1" fill="#1976d2" />
            <path d="M2 6h12M2 8.500h12" stroke="#fff" strokeDasharray="2 1" strokeWidth="1.300" />
            <path d="M4 11.500h8" stroke="#fff" />
        </>
    ),
    person: (
        <>
            <circle cx="6" cy="4" r="3" fill="#b4c0d4" />
            <path d="M0 13V9q6-3 10 0v4z" fill="#b4c0d4" />
            <path d="M6 8h10v8H6z" fill="#fff" />
            <path d="M8 9.500v5M14.500 9.500H11v5h3.500V12H11" stroke="#b4c0d4" strokeWidth="1.300" />
        </>
    ),
    shirt: <path d="M5 2q3 2.500 6 0l5 3-2 4-2-1v7H4V8L2 9 0 5z" fill="#1976d2" />,
    wrench: (
        <path
            d="M15 4.500l-3 2.500-2.500-.5L9 4l3-2.500C9 0 5.500 2 6.500 6L1 11.500c-1.500 2 1.500 5 3.500 3.500L10 9.500c4 1 6-2 5-5z"
            fill="#1976d2"
        />
    ),
    chevup: <path d="M3 10.500l5.500-5 5.500 5" stroke="#fff" strokeWidth="1.300" />,
    battery: (
        <>
            <path d="M4.500 5.500h10v6h-9M15.500 7v3" stroke="#fff" />
            <path d="M7 7h6v3H7z" fill="#fff" />
            <path d="M1.500 3v2M4.500 3v2M.5 5.500h5v2q-2.500 2-5 0zM3 8.500v3h3" stroke="#fff" />
        </>
    ),
    wifi: (
        <>
            <path d="M2 14C2 7 8 2 14 2.500M5 14c0-5 4-8.500 9-8.500M8 14c0-3.500 2.500-5.500 6-5.500" stroke="#ccc" strokeWidth="1.200" />
            <path d="M11 14c0-2 1-3 3-3v3z" fill="#fff" />
        </>
    ),
    speaker: (
        <path d="M.5 6.500h2l3-3v9l-3-3h-2zM8 6q1.500 2 0 4M10.500 4q3 4 0 8M13 2.500q4 5.500 0 11" stroke="#ddd" strokeWidth="1.100" />
    ),
    sogou: (
        <>
            <path d="M0 2.500L13.500 .5 16 13.500 2.500 16z" fill="#f4511e" />
            <path d="M12.500 4.500C9 3 4.500 4 4.500 6.200c0 2.300 7.500 1.300 7.500 4 0 2.500-5 2.800-8 1.300" stroke="#fff" strokeWidth="2" />
        </>
    ),
};

function Icon({ name }: { name: IconName }) {
    return (
        <svg viewBox="0 0 16 16" className="w-4 h-4 shrink-0" fill="none">
            {icons[name]}
        </svg>
    );
}
